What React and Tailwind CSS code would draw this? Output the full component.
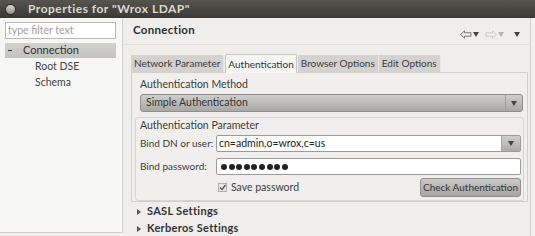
import React from "react";

const font = { fontFamily: 'Lato, "Open Sans", "DejaVu Sans", sans-serif' };

function Caret({ light }) {
  return (
    <svg width="6" height="5" viewBox="0 0 6 5">
      <path d="M0 0 L6 0 L3 5 Z" fill={light ? "#b5b5b5" : "#444"} />
    </svg>
  );
}

function ArrowLeft({ light }) {
  const c = light ? "#c4c4c4" : "#777";
  return (
    <svg width="12" height="9" viewBox="0 0 12 9">
      <path d="M0.5 4.5 L4.5 0.8 L4.5 2.8 L11 2.8 L11 6.2 L4.5 6.2 L4.5 8.2 Z" fill="none" stroke={c} strokeWidth="1" />
    </svg>
  );
}

function ArrowRight({ light }) {
  const c = light ? "#c9c9c9" : "#777";
  return (
    <svg width="12" height="9" viewBox="0 0 12 9">
      <path d="M11.5 4.5 L7.5 0.8 L7.5 2.8 L1 2.8 L1 6.2 L7.5 6.2 L7.5 8.2 Z" fill="none" stroke={c} strokeWidth="1" />
    </svg>
  );
}

function Tri() {
  return (
    <svg width="4" height="6" viewBox="0 0 4 6" className="mr-[6px]">
      <path d="M0 0 L4 3 L0 6 Z" fill="#555" />
    </svg>
  );
}

const tabs = ["Network Parameter", "Authentication", "Browser Options", "Edit Options"];

export default function App() {
  return (
    <div className="w-[535px] h-[236px] overflow-hidden flex flex-col bg-[#f2f1f0] text-[#3c3c3c]" style={font}>
      {/* title bar */}
      <div className="h-[18px] shrink-0 flex items-center bg-gradient-to-b from-[#55544f] to-[#3a3935] pl-[5px]">
        <div className="w-[11px] h-[11px] rounded-full bg-gradient-to-b from-[#d8d6d0] to-[#8e8c86] border border-[#2c2b28]" />
        <span className="ml-[12px] text-[12px] font-bold text-[#dcd9d2] tracking-[0.5px] leading-none">
          Properties for "Wrox LDAP"
        </span>
      </div>

      <div className="flex flex-1 min-h-0">
        {/* left tree */}
        <div className="w-[123px] shrink-0 h-[215px] bg-[#f7f7f6] border-r border-b border-[#cfcecb] pt-[4px] pl-[5px] pr-[6px] flex flex-col">
          <div className="h-[17px] shrink-0 bg-white border border-[#b9b8b5] flex items-center pl-[2px] text-[10.5px] text-[#a09f9c]">
            type filter text
          </div>
          <div className="mt-[4px] h-[15px] shrink-0 bg-gradient-to-b from-[#d2d1ce] to-[#c3c2bf] flex items-center text-[11px] text-[#333]">
            <span className="ml-[3px] w-[4px] h-[1.5px] bg-[#333]" />
            <span className="ml-[11px]">Connection</span>
          </div>
          <div className="pl-[30px] text-[10.5px] text-[#444]">
            <div className="h-[16px] mt-[1px] flex items-center">Root DSE</div>
            <div className="h-[16px] flex items-center">Schema</div>
          </div>
        </div>

        {/* right side */}
        <div className="flex-1 flex flex-col border-r border-[#cfcecb] mr-[4px] bg-[#efeeec]">
          <div className="h-[27px] shrink-0 flex items-center pl-[10px] pr-[10px] border-b border-[#e3e2e0]">
            <span className="text-[11.5px] font-bold text-[#2e2e2e] tracking-[0.3px] mt-[-2px]">Connection</span>
            <div className="ml-auto flex items-center gap-[1px] mt-[6px]">
              <ArrowLeft />
              <Caret />
              <span className="w-[4px]" />
              <ArrowRight light />
              <Caret light />
              <span className="w-[8px]" />
              <Caret />
            </div>
          </div>

          <div className="pl-[8px] pr-[2px] pt-[8px] shrink-0">
            {/* tabs */}
            <div className="flex items-end h-[19px]">
              {tabs.map((t) =>
                t === "Authentication" ? (
                  <div
                    key={t}
                    className="h-[19px] px-[2px] mx-[1px] bg-[#f6f6f5] border border-b-0 border-[#c8c7c4] rounded-t-[2px] flex items-center text-[10px] text-[#333] relative z-10 mb-[-1px] whitespace-nowrap"
                  >
                    {t}
                  </div>
                ) : (
                  <div
                    key={t}
                    className="h-[17px] px-[3px] bg-[#d3d2cf] border-r border-[#e8e7e5] flex items-center text-[10px] text-[#3a3a3a] whitespace-nowrap"
                  >
                    {t}
                  </div>
                )
              )}
            </div>

            {/* tab panel */}
            <div className="border border-[#d0cfcc] bg-[#f0efed] h-[130px] px-[3px] pt-[5px]">
              <div className="pl-[5px] text-[10.5px] h-[13px] leading-[13px]">Authentication Method</div>
              <div className="mt-[3px] ml-[5px] mr-[1px] h-[18px] rounded-[3px] border border-[#8f8e8b] bg-gradient-to-b from-[#cfcecb] to-[#a9a8a5] flex items-center">
                <span className="pl-[5px] text-[10.5px] text-[#333]">Simple Authentication</span>
                <div className="ml-auto h-full w-[17px] border-l border-[#9c9b98] flex items-center justify-center">
                  <Caret />
                </div>
              </div>

              {/* group */}
              <div className="mt-[5px] border border-[#d6d5d2] rounded-[3px] h-[84px] pl-[4px] pr-[2px]">
                <div className="text-[10.5px] h-[13px] leading-[13px] mt-[1px]">Authentication Parameter</div>
                <div className="flex items-center mt-[3px] h-[17px]">
                  <span className="w-[76px] shrink-0 whitespace-nowrap text-[10px]">Bind DN or user:</span>
                  <div className="flex-1 h-full flex border border-[#9b9a97] rounded-[2px] bg-white">
                    <span className="flex-1 pl-[2px] text-[10.5px] text-[#222] leading-[15px]">cn=admin,o=wrox,c=us</span>
                    <div className="w-[19px] h-full border-l border-[#a8a7a4] bg-gradient-to-b from-[#cfcecb] to-[#adaca9] flex items-center justify-center">
                      <Caret />
                    </div>
                  </div>
                </div>
                <div className="flex items-center mt-[6px] h-[17px]">
                  <span className="w-[76px] shrink-0 whitespace-nowrap text-[10px]">Bind password:</span>
                  <div className="flex-1 h-full border border-[#9b9a97] rounded-[2px] bg-white flex items-center pl-[4px] gap-[1.6px]">
                    {Array.from({ length: 9 }).map((_, i) => (
                      <span key={i} className="w-[6px] h-[6px] rounded-full bg-[#222]" />
                    ))}
                  </div>
                </div>
                <div className="flex items-center mt-[3px] h-[19px]">
                  <span className="w-[76px]" />
                  <div className="w-[9px] h-[9px] border border-[#b0afac] bg-[#e9e8e6] flex items-center justify-center ml-[2px]">
                    <svg width="7" height="7" viewBox="0 0 7 7">
                      <path d="M1 3.5 L3 5.5 L6.5 1" fill="none" stroke="#555" strokeWidth="1.4" />
                    </svg>
                  </div>
                  <span className="ml-[4px] text-[10.5px]">Save password</span>
                  <div className="ml-auto h-[19px] w-[101px] justify-center rounded-[3px] border border-[#8f8e8b] bg-gradient-to-b from-[#cbcac7] to-[#a6a5a2] flex items-center text-[10px] text-[#333] whitespace-nowrap">
                    Check Authentication
                  </div>
                </div>
              </div>
            </div>

            <div className="mt-[1px] pl-[6px] flex flex-col text-[11px] font-bold text-[#333] tracking-[0.3px]">
              <div className="h-[17px] flex items-center">
                <Tri />
                SASL Settings
              </div>
              <div className="h-[17px] flex items-center">
                <Tri />
                Kerberos Settings
              </div>
            </div>
          </div>
        </div>
      </div>
    </div>
  );
}
